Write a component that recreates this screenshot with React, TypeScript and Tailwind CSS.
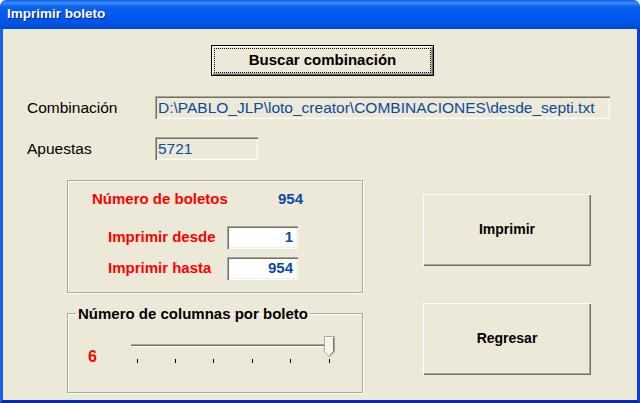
export default function App() {
  const font = "font-['Liberation_Sans',Arial,sans-serif]";
  const sunken =
    "shadow-[inset_1px_1px_0_#ACA899,inset_2px_2px_0_#716F64,inset_-1px_-1px_0_#FFFFFF,inset_-2px_-2px_0_#F1EFE2]";
  const raised =
    "shadow-[inset_1px_1px_0_#FFFFFF,inset_-1px_-1px_0_#716F64,inset_-2px_-2px_0_#ACA899]";
  const etched = "border border-[#ACA899] shadow-[inset_1px_1px_0_#FFFFFF,1px_1px_0_#FFFFFF]";

  return (
    <div className={`w-[640px] h-[403px] bg-white flex flex-col ${font}`}>
      {/* barra de titulo */}
      <div className="h-[29px] shrink-0 rounded-t-[6px] flex items-center pl-[7px] bg-[linear-gradient(to_bottom,#0A5BE8_0%,#3D8EF8_10%,#0B63EE_22%,#0058EE_50%,#0054E6_80%,#0047CF_100%)]">
        <span className="text-white font-bold text-[13.5px] [text-shadow:1px_1px_0_#0A2890]">Imprimir boleto</span>
      </div>

      {/* area cliente */}
      <div className="flex-1 bg-[#ECE9D8] border-l-[3px] border-r-[3px] border-b-[3px] border-l-[#1662EE] border-r-[#0A3DD8] border-b-[#0A28B0] flex flex-col">
        <button
          className={`ml-[208px] mt-[16px] w-[223px] h-[31px] border border-black bg-[#ECE9D8] ${raised} outline-1 outline-dotted outline-black -outline-offset-4 text-[15px] font-bold text-black`}
        >
          Buscar combinación
        </button>

        <div className="flex items-center mt-[20px]">
          <span className="pl-[24px] w-[152px] text-[15.5px] text-black">Combinación</span>
          <div className={`w-[455px] h-[23px] flex items-center pl-[3px] ${sunken} text-[15.5px] text-[#0B4A9E]`}>
            D:\PABLO_JLP\loto_creator\COMBINACIONES\desde_septi.txt
          </div>
        </div>

        <div className="flex items-center mt-[18px]">
          <span className="pl-[24px] w-[152px] text-[15.5px] text-black">Apuestas</span>
          <div className={`w-[103px] h-[23px] flex items-center pl-[3px] ${sunken} text-[15.5px] text-[#0B4A9E]`}>
            5721
          </div>
        </div>

        <div className="flex ml-[64px] mt-[19px]">
          <div className="w-[296px] flex flex-col">
            {/* grupo boletos */}
            <div className={`h-[113px] ${etched} pl-[24px] pt-[10px] flex flex-col`}>
              <div className="flex h-[17px] items-center text-[15px] font-bold">
                <span className="w-[186px] text-[#FF0000]">Número de boletos</span>
                <span className="text-[#0B4A9E]">954</span>
              </div>
              <div className="grid grid-cols-[119px_71px] items-center gap-y-[8px] pl-[16px] mt-[18px] text-[15px] font-bold">
                <span className="text-[#FF0000]">Imprimir desde</span>
                <div className={`h-[23px] bg-white flex items-center justify-end pr-[5px] ${sunken} text-[#0B4A9E]`}>1</div>
                <span className="text-[#FF0000]">Imprimir hasta</span>
                <div className={`h-[23px] bg-white flex items-center justify-end pr-[5px] ${sunken} text-[#0B4A9E]`}>954</div>
              </div>
            </div>

            {/* grupo columnas */}
            <fieldset className={`mt-[13px] h-[87px] ${etched} px-[8px]`}>
              <legend className="px-[2px] text-[15px] font-bold leading-[16px] text-black">
                Número de columnas por boleto
              </legend>
              <div className="flex items-start mt-[14px]">
                <span className="ml-[12px] mt-[13px] w-[42px] text-[16px] leading-[16px] font-bold text-[#FF0000]">6</span>
                <svg width="206" height="28" viewBox="0 0 206 28">
                  <rect x="1" y="8" width="202" height="1" fill="#ACA899" />
                  <rect x="1" y="9" width="202" height="1" fill="#716F64" />
                  <rect x="1" y="10" width="202" height="1" fill="#FFFFFF" />
                  {[7, 45, 83, 122, 160, 199].map((x) => (
                    <rect key={x} x={x} y="23" width="1" height="4" fill="#000000" />
                  ))}
                  <polygon points="194.5,0.5 204.5,0.5 204.5,16 199.5,21 194.5,16" fill="#F4F3EE" stroke="#ACA899" />
                  <polyline points="195.5,16 195.5,1.5 203.5,1.5" fill="none" stroke="#FFFFFF" />
                  <polyline points="203.5,1.5 203.5,15.5 199.5,19.5" fill="none" stroke="#716F64" />
                </svg>
              </div>
            </fieldset>
          </div>

          <div className="ml-[60px] mt-[14px] flex flex-col gap-[37px]">
            <button className={`w-[168px] h-[72px] bg-[#ECE9D8] ${raised} text-[14px] font-bold text-black`}>
              Imprimir
            </button>
            <button className={`w-[168px] h-[72px] bg-[#ECE9D8] ${raised} text-[14px] font-bold text-black`}>
              Regresar
            </button>
          </div>
        </div>
      </div>
    </div>
  );
}
